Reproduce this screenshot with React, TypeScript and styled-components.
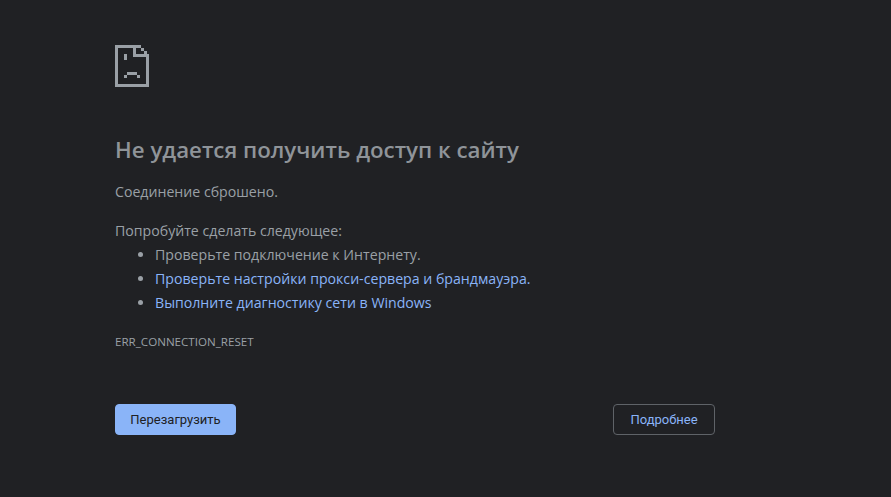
import React from "react";
import styled, { createGlobalStyle } from "styled-components";

const GlobalStyle = createGlobalStyle`
  html, body {
    margin: 0;
    height: 100%;
    background: #202124;
  }
`;

const Page = styled.div`
  box-sizing: border-box;
  height: 497px;
  width: 891px;
  padding: 45px 176px 0 115px;
  font-family: "Open Sans", "Liberation Sans", sans-serif;
  color: #9aa0a6;
  font-size: 14.15px;
  overflow: hidden;
`;

const IconBox = styled.div`
  height: 42px;
  margin-bottom: 45px;
`;

const Title = styled.h1`
  margin: 0 0 12px;
  font-size: 22.3px;
  line-height: 36px;
  font-weight: 600;
  color: #8f9499;
`;

const Text = styled.p`
  margin: 0 0 15px;
  line-height: 24px;
`;

const Hint = styled.p`
  margin: 0;
  line-height: 24px;
`;

const List = styled.ul`
  margin: 0;
  padding-left: 40px;
`;

const Item = styled.li`
  line-height: 24px;
`;

const TipLink = styled.a`
  color: #8ab4f8;
  text-decoration: none;
`;

const Code = styled.div`
  margin-top: 19px;
  font-size: 11.6px;
  line-height: 16px;
  color: #9aa0a6;
`;

const Buttons = styled.div`
  display: flex;
  justify-content: space-between;
  margin-top: 54px;
`;

const Button = styled.button<{ $primary?: boolean }>`
  box-sizing: border-box;
  height: 31px;
  padding: 0;
  width: ${(p) => (p.$primary ? "121px" : "102px")};
  border-radius: 4px;
  border: 1px solid ${(p) => (p.$primary ? "#8ab4f8" : "#5f6368")};
  background: ${(p) => (p.$primary ? "#8ab4f8" : "#202124")};
  color: ${(p) => (p.$primary ? "#202124" : "#8ab4f8")};
  font-family: Roboto, "Liberation Sans", sans-serif;
  font-size: 13px;
`;

// pixel-style sad page
const SadPage = () => (
  <svg width="34" height="42" viewBox="0 0 34 42" shapeRendering="crispEdges" fill="#9aa0a6">
    <path d="M0 0h26v3H3v36h28V9h3v33H0z" />
    <path d="M18 0h3v9h13v3H18z" />
    <path d="M26 3h3v3h-3zM29 6h3v3h-3z" />
    <path d="M9 9h3v6H9z" />
    <path d="M12 27h10v3H12zM9 30h3v3H9zM22 30h3v3h-3z" />
  </svg>
);

export default function App() {
  return (
    <Page>
      <GlobalStyle />
      <IconBox>
        <SadPage />
      </IconBox>
      <Title>Не удается получить доступ к сайту</Title>
      <Text>Соединение сброшено.</Text>
      <Hint>Попробуйте сделать следующее:</Hint>
      <List>
        <Item>Проверьте подключение к Интернету.</Item>
        <Item>
          <TipLink href="#">Проверьте настройки прокси-сервера и брандмауэра.</TipLink>
        </Item>
        <Item>
          <TipLink href="#">Выполните диагностику сети в Windows</TipLink>
        </Item>
      </List>
      <Code>ERR_CONNECTION_RESET</Code>
      <Buttons>
        <Button $primary>Перезагрузить</Button>
        <Button>Подробнее</Button>
      </Buttons>
    </Page>
  );
}
